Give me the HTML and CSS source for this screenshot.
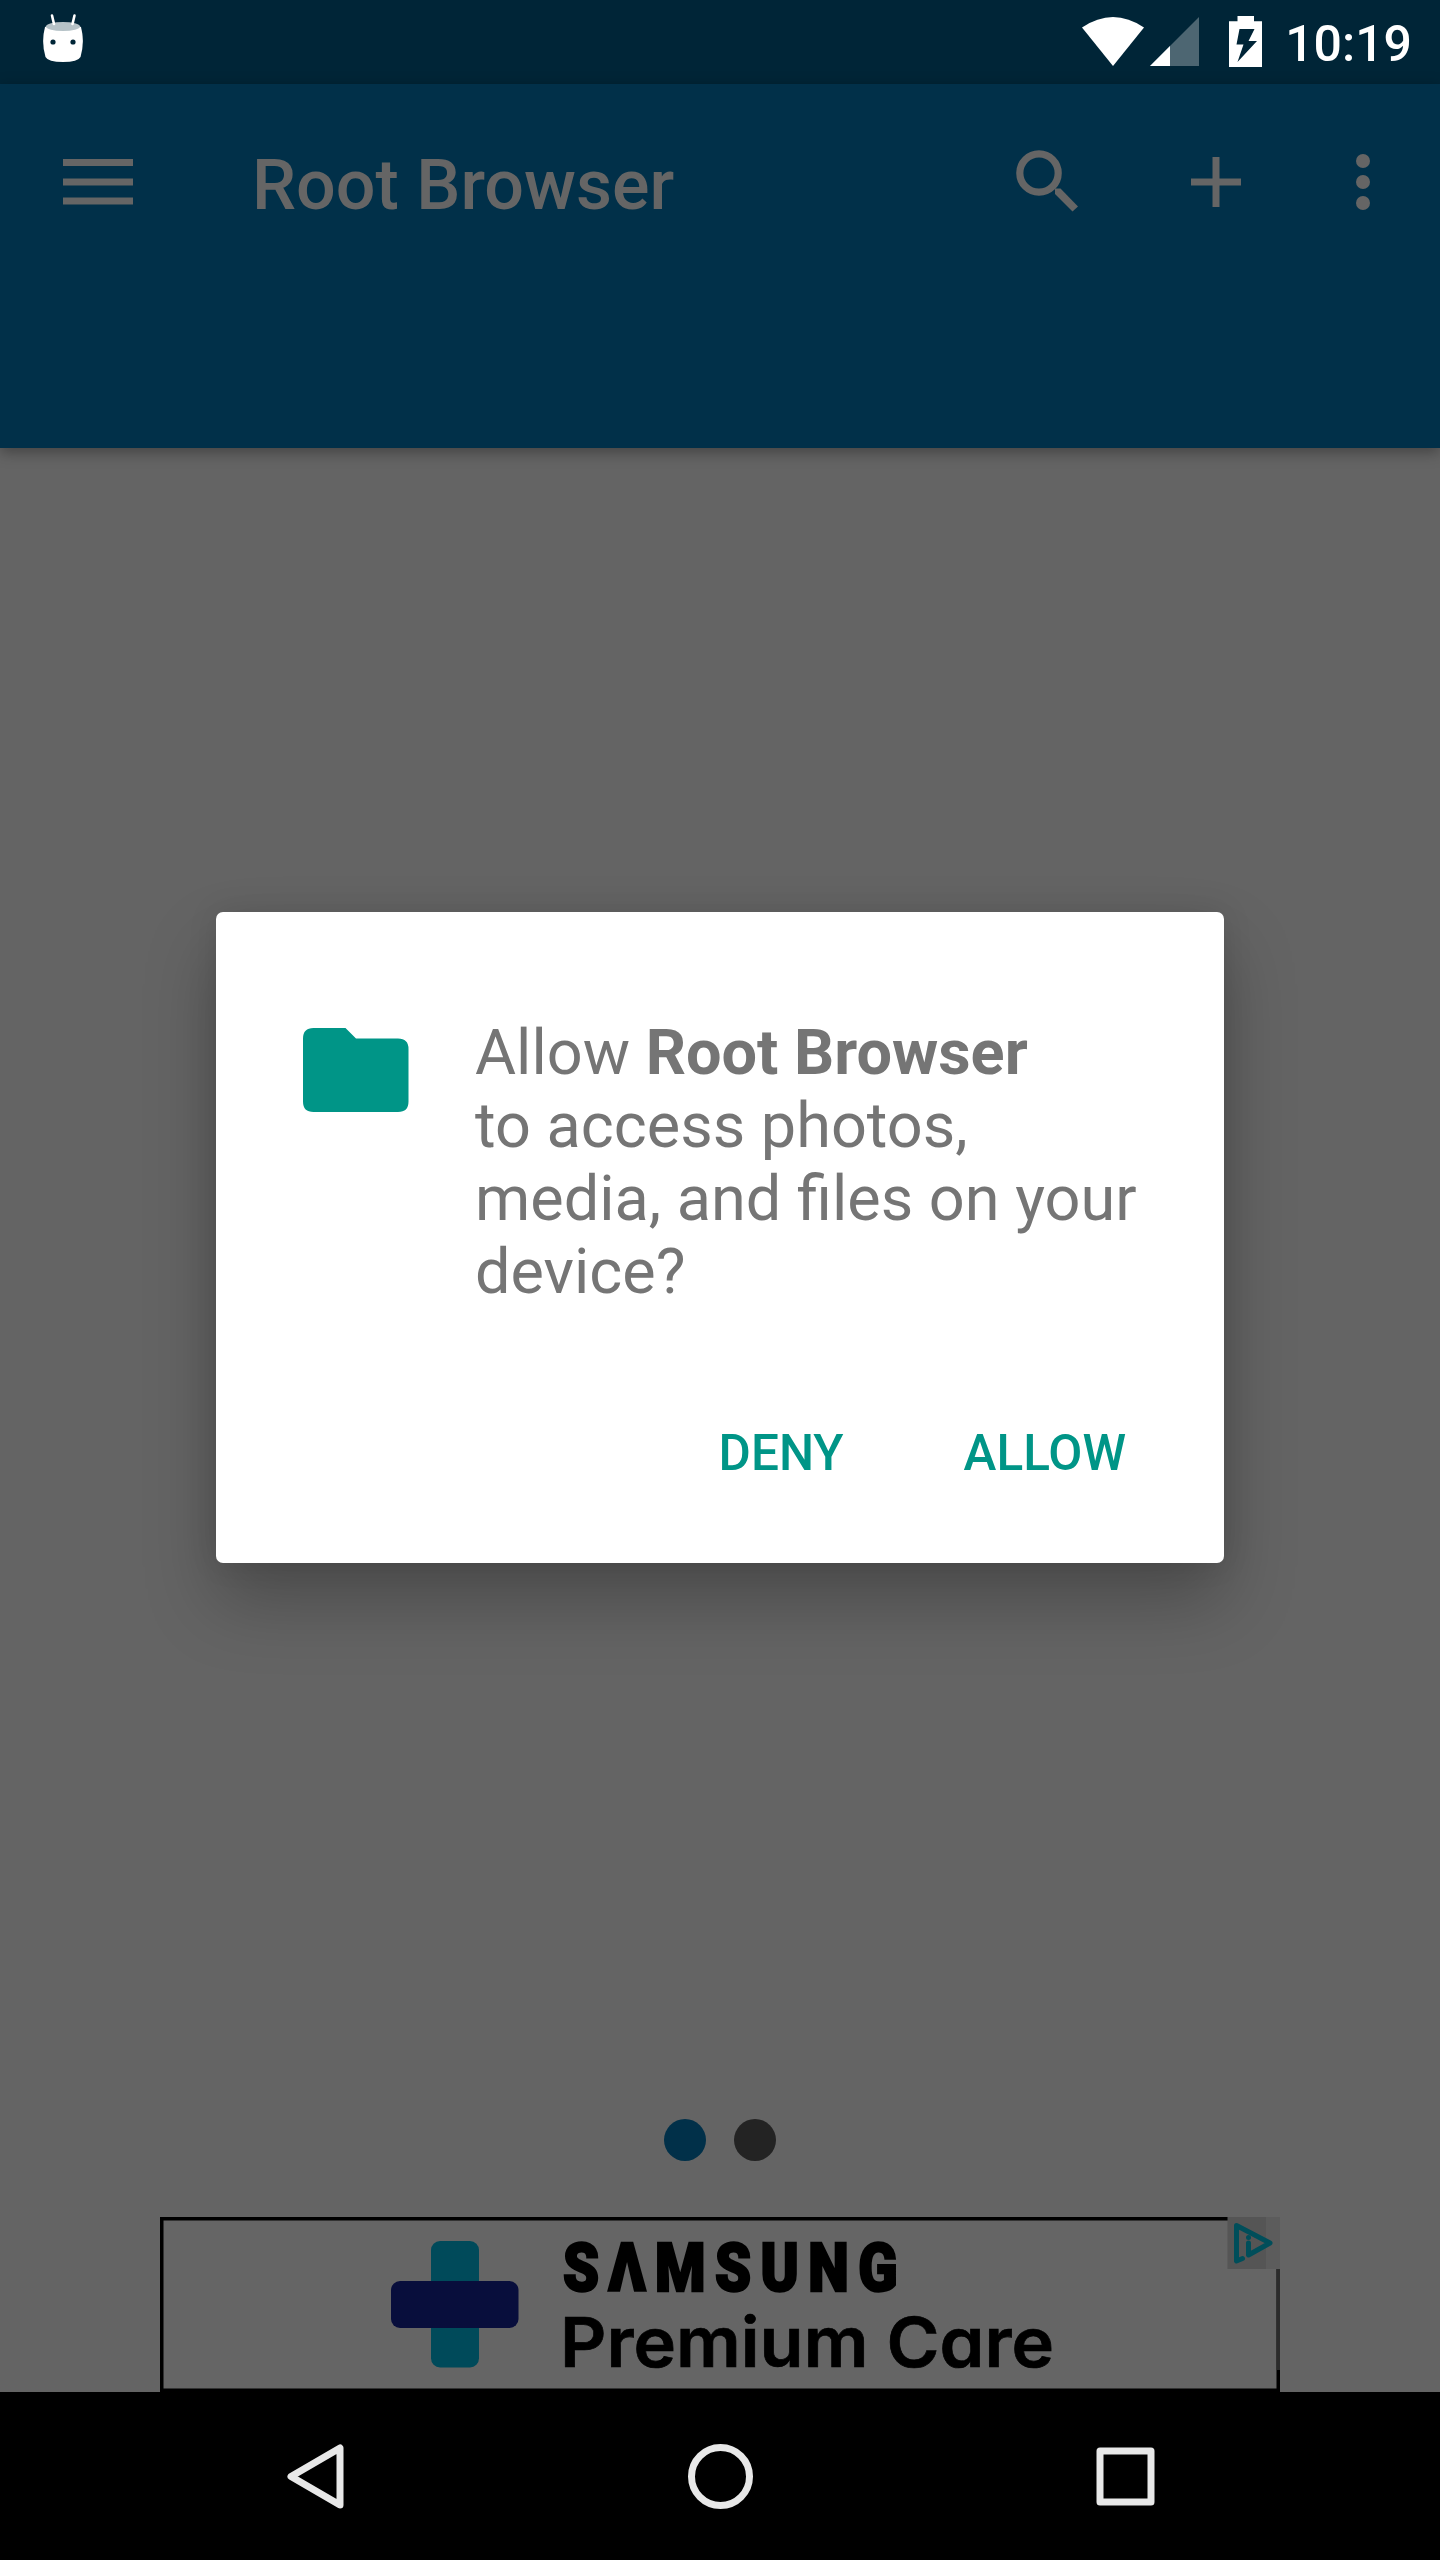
FILE: index.html
```html
<!DOCTYPE html>
<html lang="en">
<head>
<meta charset="utf-8">
<title>Root Browser</title>
<link rel="stylesheet" href="styles.css">
</head>
<body>
<div class="screen">
  <header class="status-bar">
    <svg class="status-robot" width="40" height="50" viewBox="43 13 40 50" aria-hidden="true">
      <path d="M45 27 Q63 19 81 27 Q85 42 80.500 57 Q78 62 63 62 Q48 62 45.500 57 Q41 42 45 27Z" fill="#fff"/>
      <ellipse cx="63" cy="26.500" rx="17" ry="4.500" fill="#b5c2c7"/>
      <path d="M52 15.500 54 24M74.500 15.500 72.500 24" stroke="#fff" stroke-width="2.600" stroke-linecap="round"/>
      <circle cx="53" cy="42" r="2.600" fill="#002537"/><circle cx="73" cy="42" r="2.600" fill="#002537"/>
    </svg>
    <div class="status-tray">
      <svg width="184" height="54" viewBox="1080 14 184 54" aria-hidden="true">
        <path d="M1082 27.500 Q1113 6.500 1144 27.500 L1113 66Z" fill="#fff"/>
        <path d="M1199 17 V66 H1150Z" fill="#4d6672"/>
        <path d="M1170 46 V66 H1150Z" fill="#fff"/>
        <path fill-rule="evenodd" fill="#fff" d="M1237.500 16 H1254 V21.300 H1262 V67 H1229 V21.300 H1237.500Z M1239.500 29 H1254.500 L1248.500 41 H1257 L1237.500 62 L1243.500 44.500 H1236.500Z"/>
      </svg>
      <span class="clock">10:19</span>
    </div>
  </header>
  <div class="toolbar">
    <svg class="menu" width="70" height="46" viewBox="0 0 70 46" aria-hidden="true"><path d="M0 3.500H70M0 23H70M0 42H70" stroke="#656565" stroke-width="7"/></svg>
    <h1 class="title">Root Browser</h1>
    <svg class="search" width="64" height="64" viewBox="1015 149 64 64" fill="none" stroke="#656565" aria-hidden="true">
      <circle cx="1039" cy="173" r="19.200" stroke-width="7.200"/>
      <path d="M1055 188.500H1060.500L1078 206.500 1072.500 211.500 1055 194Z" fill="#656565" stroke="none"/>
    </svg>
    <svg class="plus" width="50" height="50" viewBox="0 0 50 50" aria-hidden="true"><path d="M0 25H50M25 0V50" stroke="#656565" stroke-width="7"/></svg>
    <svg class="more" width="14" height="56" viewBox="0 0 14 56" fill="#656565" aria-hidden="true"><circle cx="7" cy="7" r="7"/><circle cx="7" cy="28" r="7"/><circle cx="7" cy="49" r="7"/></svg>
  </div>
  <main class="content">
    <section class="dialog">
      <div class="dialog-body">
        <svg width="106" height="84" viewBox="0 0 106 84" aria-hidden="true"><path d="M10.500 0H42.500L53 10.500H95Q105.500 10.500 105.500 21V73.500Q105.500 84 95 84H10.500Q0 84 0 73.500V10.500Q0 0 10.500 0Z" fill="#009587"/></svg>
        <p class="message">Allow <b>Root Browser</b><br>to access photos,<br>media, and files on your<br>device?</p>
      </div>
      <div class="actions"><span>DENY</span><span>ALLOW</span></div>
    </section>
    <div class="pager"><i class="dot active"></i><i class="dot"></i></div>
    <div class="ad">
      <svg width="1120" height="175" viewBox="160 2217 1120 175">
        <rect x="161.750" y="2218.750" width="1116.500" height="171.500" fill="#656565" stroke="#000" stroke-width="3.500"/>
        <rect x="431" y="2241" width="48" height="126.500" rx="9" fill="#004a5a"/>
        <rect x="391" y="2281" width="127.500" height="47" rx="9" fill="#080e3c"/>
        <text class="brand" x="563" y="2291" textLength="344" lengthAdjust="spacingAndGlyphs">SΛMSUNG</text>
        <text class="product" x="560" y="2367" textLength="494" lengthAdjust="spacingAndGlyphs">Premium Care</text>
        <path d="M1278.500 2269V2370" stroke="#2c2c2c" stroke-width="3"/>
        <path d="M1227.500 2217H1280V2269H1227.500Z" fill="#555"/>
        <path d="M1266 2217H1280V2269H1266Z" fill="#5c5c5c"/>
        <path d="M1242.500 2258.500 1236.500 2261V2225.500L1270 2243 1248.500 2255V2243" fill="none" stroke="#004e5a" stroke-width="5" stroke-linejoin="round" stroke-linecap="round"/>
        <circle cx="1248.500" cy="2237.500" r="2.500" fill="#004e5a"/>
      </svg>
    </div>
  </main>
  <nav class="nav-bar">
    <svg width="870" height="66" viewBox="287 2444 870 66" fill="none" stroke="#e8e8e8" stroke-width="7" stroke-linejoin="round" aria-hidden="true">
      <path d="M340 2448V2505L291 2476.500Z"/>
      <circle cx="720.500" cy="2476.500" r="29"/>
      <rect x="1100" y="2451" width="51" height="51"/>
    </svg>
  </nav>
</div>
</body>
</html>
```

FILE: styles.css
```css
* { box-sizing: border-box; }
body { margin: 0; background: #646464; font-family: Roboto, sans-serif; }
.screen { width: 1440px; height: 2560px; display: flex; flex-direction: column; overflow: hidden; }
.status-bar { height: 84px; flex: none; background: #002537; display: flex; justify-content: space-between; padding: 13px 28px 0 43px; }
.status-tray { display: flex; align-items: flex-start; gap: 21px; padding-top: 1px; }
.clock { color: #fff; font-size: 50px; font-weight: 500; line-height: 60px; }
.toolbar { height: 364px; flex: none; background: #013049; display: flex; align-items: flex-start; padding: 0 70px 0 63px; box-shadow: 0 4px 14px rgba(0, 0, 0, .35); }
.menu { margin-top: 75px; }
.title { margin: 61px auto 0 119px; color: #656565; font-size: 70px; font-weight: 500; line-height: 80px; }
.search { margin: 65px 112px 0 0; }
.plus { margin: 73px 115px 0 0; }
.more { margin-top: 70px; }
.content { flex: 1; display: flex; flex-direction: column; align-items: center; padding-top: 464px; }
.dialog { width: 1008px; height: 651px; flex: none; background: #fff; border-radius: 7px; padding: 104px 98px 0 87px; box-shadow: 0 38px 70px rgba(0, 0, 0, .25), 0 0 30px rgba(0, 0, 0, .1); }
.dialog-body { display: flex; gap: 66px; }
.dialog-body svg { flex: none; margin-top: 12px; }
.message { margin: 0; color: #757575; font-size: 63px; line-height: 73px; white-space: nowrap; }
.actions { display: flex; justify-content: flex-end; gap: 120px; margin-top: 115px; color: #009587; font-size: 49.5px; font-weight: 500; line-height: 60px; }
.pager { display: flex; gap: 28px; margin-top: 556px; }
.dot { width: 42px; height: 42px; border-radius: 50%; background: #232323; }
.dot.active { background: #013049; }
.ad { margin-top: 56px; height: 175px; }
.ad svg { display: block; }
.brand { font-family: Roboto, sans-serif; font-size: 67px; font-weight: 900; letter-spacing: 11px; stroke: #000; stroke-width: 2.5px; }
.product { font-family: Inter, sans-serif; font-size: 69px; font-weight: 600; font-feature-settings: "cv11"; stroke: #000; stroke-width: .7px; }
.nav-bar { height: 168px; flex: none; background: #000; display: flex; padding: 52px 0 0 287px; }
```
